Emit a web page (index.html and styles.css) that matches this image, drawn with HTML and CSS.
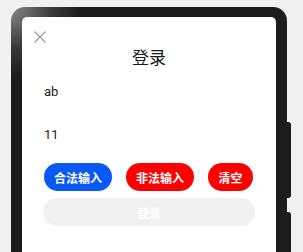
FILE: index.html
```html
<!DOCTYPE html>
<html lang="zh">
<head>
    <meta charset="UTF-8">
    <meta name="viewport" content="width=device-width, initial-scale=1.0">
    <title>登录</title>
    <link rel="stylesheet" href="styles.css">
</head>
<body>
    <div class="device">
        <div class="side-key key-top"></div>
        <div class="side-key key-bottom"></div>

        <div class="screen">
            <div class="close-row">
                <svg class="close" width="12" height="12" viewBox="0 0 12 12">
                    <path d="M0.5 0.5 L11.5 11.5 M11.5 0.5 L0.5 11.5" stroke="#9a9a9a" stroke-width="1.2" fill="none"/>
                </svg>
            </div>

            <h1 class="title">登录</h1>

            <div class="field">ab</div>
            <div class="field">11</div>

            <div class="actions">
                <button class="btn btn-blue">合法输入</button>
                <button class="btn btn-red">非法输入</button>
                <button class="btn btn-red">清空</button>
            </div>

            <button class="login">登录</button>
        </div>
    </div>
</body>
</html>
```

FILE: styles.css
```css
* {
    box-sizing: border-box;
}

body {
    margin: 0;
    width: 303px;
    height: 252px;
    overflow: hidden;
    background-color: #f1f1f1;
    font-family: Roboto, "Noto Sans CJK SC", sans-serif;
}

/* marco del dispositivo */
.device {
    position: relative;
    margin: 7px 0 0 11px;
    width: 276px;
    height: 245px;
    padding: 10px 11px 0 11px;
    border-radius: 14px 14px 0 0;
    background: radial-gradient(circle at 0 0, #8a8a8a 0, #3a3a3a 40px, #1c1c1c 70px);
}

.side-key {
    position: absolute;
    left: 274px;
    width: 6px;
    background-color: #1c1c1c;
    border-radius: 0 3px 3px 0;
}

.key-top {
    top: 115px;
    height: 76px;
}

.key-bottom {
    top: 205px;
    height: 40px;
    border-radius: 0 3px 0 0;
}

.screen {
    height: 100%;
    background-color: #fff;
    border-radius: 5px 5px 0 0;
    padding: 14px 21px 0 21px;
}

.close-row {
    height: 12px;
    margin-left: -9px;
}

.close {
    display: block;
}

.title {
    margin: 3px 0 0 0;
    height: 24px;
    line-height: 24px;
    text-align: center;
    font-size: 17px;
    font-weight: 400;
    color: #1a1a1a;
}

.field {
    height: 43px;
    line-height: 43px;
    padding-left: 1px;
    font-size: 13px;
    color: #222;
}

.actions {
    display: flex;
    gap: 14px;
    margin-top: 7px;
    padding-left: 1px;
}

.btn {
    height: 28px;
    padding: 0 10px;
    border: none;
    border-radius: 14px;
    font-family: "Noto Sans CJK SC", sans-serif;
    font-size: 12px;
    font-weight: 700;
    color: #fff;
}

.btn-blue {
    width: 68px;
    background-color: #0a59f7;
}

.btn-red {
    background-color: #ff0000;
}

.btn-red:nth-child(2) {
    width: 68px;
}

.btn-red:nth-child(3) {
    width: 45px;
}

.login {
    display: block;
    width: 100%;
    height: 28px;
    margin-top: 7px;
    border: none;
    border-radius: 14px;
    background-color: #f1f1f1;
    color: #fff;
    font-family: "Noto Sans CJK SC", sans-serif;
    font-size: 12px;
    font-weight: 700;
}
```
